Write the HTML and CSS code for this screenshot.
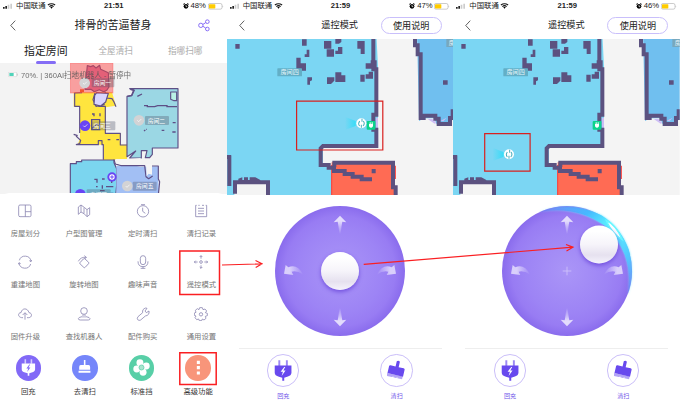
FILE: index.html
```html
<!DOCTYPE html>
<html lang="zh-CN">
<head>
<meta charset="utf-8">
<title>360AI扫地机器人</title>
<link rel="stylesheet" href="styles.css">
</head>
<body>
<svg class="defs" width="0" height="0">
  <defs>
    <symbol id="signal" viewBox="0 0 30 18"><path d="M0 12h5v5H0zM7 9h5v8H7z" fill="#222"/><path d="M14 5h5v12h-5zM22 2h5v15h-5z" fill="#ccc"/></symbol>
    <symbol id="wifi" viewBox="0 0 28 20"><g fill="none" stroke="#111" stroke-width="4"><path d="M2 7Q14-2 26 7M7 12Q14 6 21 12"/></g><path d="M10 14Q14 11 18 14L14 19z"/></symbol>
    <symbol id="alarm" viewBox="0 0 18 18"><circle cx="9" cy="10" r="7"/><path d="M1 4L5 1M17 4L13 1" stroke="#000" stroke-width="3"/><path d="M9 6v5h4" fill="none" stroke="#fff" stroke-width="2"/></symbol>
    <symbol id="battery" viewBox="0 0 48 20"><rect x="1" y="1" width="41" height="17" rx="5" fill="#fff" stroke="#999" stroke-width="1.5"/><rect x="3" y="3" width="19" height="13" rx="2" fill="#fc0"/><path d="M44 7q3 3 0 6z" fill="#999"/></symbol>
    <symbol id="chevron" viewBox="0 0 18 34"><path d="M16 2L2 17L16 32" fill="none" stroke="#333" stroke-width="2.4"/></symbol>

    <linearGradient id="fade" x1="0" y1="0" x2="0" y2="1"><stop offset=".3" stop-color="#e3dcfc"/><stop offset="1" stop-color="#e3dcfc" stop-opacity="0"/></linearGradient>
    <linearGradient id="fade-side" x1="0" y1="0" x2="1" y2="0"><stop offset=".3" stop-color="#e0d8fc" stop-opacity=".9"/><stop offset="1" stop-color="#e0d8fc" stop-opacity="0"/></linearGradient>
    <linearGradient id="beam" x1="0" y1="0" x2="1" y2="0"><stop offset="0" stop-color="#3cdcf8" stop-opacity=".05"/><stop offset=".7" stop-color="#35dcf8" stop-opacity=".9"/><stop offset="1" stop-color="#c8f6fc"/></linearGradient>
    <linearGradient id="rim" x1="0" y1="0" x2="1" y2="1"><stop offset="0" stop-color="#5b6cf5" stop-opacity=".3"/><stop offset=".3" stop-color="#45b9ff"/><stop offset=".5" stop-color="#5dfaff"/><stop offset=".75" stop-color="#52c9ff"/><stop offset="1" stop-color="#587df6" stop-opacity=".3"/></linearGradient>

    <symbol id="arrows" viewBox="0 0 390 390">
      <path id="up" d="M195 29L214 49L202 47Q199 60 197 84H193Q191 60 188 47L176 49z" fill="url(#fade)"/>
      <use href="#up" transform="matrix(1 0 0 -1 0 390)"/>
      <path id="left" d="M27 203L32 177L40 184Q66 172 85 206Q66 193 50 197L55 207z" fill="url(#fade-side)"/>
      <use href="#left" transform="matrix(-1 0 0 1 390 0)"/>
    </symbol>
    <symbol id="plug" viewBox="0 0 54 64">
      <path d="M12 1h6v17h-6zM35 1h6v17h-6z" opacity=".65"/><path d="M1 17h51v22q0 9-13 12l-9 3v9h-6v-9l-10-3Q1 48 1 39z"/><path d="M30 21L19 36h7l-4 13 12-17h-7l6-11z" class="bolt"/>
    </symbol>
    <symbol id="brush" viewBox="0 0 58 60">
      <g transform="rotate(13 29 30)"><path d="M24 1q5-5 10 0v17h16q4 0 4 4v22H4V22q0-4 4-4h16z"/><path d="M3 44h50v9H38v-3l-5 3h-8v-3l-5 3H3z" opacity=".5"/></g>
    </symbol>
    <symbol id="robot" viewBox="0 0 90 50">
      <path d="M5 6L30 16L47 22V28L30 35L5 44z" fill="url(#beam)"/><circle cx="53" cy="25" r="15" fill="#fff"/><path d="M55 11v9M48 18q-6 8 0 15M59 18q6 8-1 15M53 29v9" fill="none" stroke="#49aebc" stroke-width="3"/>
    </symbol>

    <symbol id="rooms" viewBox="2 116 680 468">
      <path fill="#f4f4f4" d="M0 100h700v500H0z"/>
      <path fill="#7bd6f3" d="M0 100h450l5 98v238H290v58l28 8v90H126v-48H24v48H0z"/>
      <path fill="#70bfef" d="M572 100h120v260l-14-2-5 14h-42l-8-18h-30l-15 8z"/>
      <path fill="#cdbdf5" d="M449 352h6v30h-6zM604 356h14l12 12-5 2zM643 361l18-9-10 11z"/>
      <path fill="#ff6b54" d="M316 486h190v110H316z"/><path d="M316 494v90M507 496v40" stroke="#ff3933" stroke-width="3"/>
      <g fill="none" stroke="#5c5280" stroke-width="12">
        <path d="M441 110v97h9v136h-9v45h9v49H290l-7 7v50h24v8h16v10h32v9h24v8h27v8h31"/>
        <path d="M324 500v-13h176v74h8v30"/>
        <path d="M566 110v25h8v27h9v191h9v-7h35v9h10v16h34v-18h8v-26"/>
        <path d="M9 465v92M26 580v-34h99v50M0 470h14"/>
      </g>
      <g fill="#5c5280">
        <path d="M27 131h13v14H27zM227 117h14v19h-14zM235 148h14v22h-14v-8h6v-14zM293 122h22v23h-22zM301 147h22v22h-22zM327 116h18v9l-7 5h-11zM327 151h8v-11h13v21h-21zM393 122h22v39h-12v-16h-10zM210 172h13v17h16v22h-29zM418 189h15v-9h18v25h-33zM243 231h14v9l-6 3v10h-8zM302 231h22v10l-10 10h-12zM327 216h18v9h12v20h-30zM402 223h13v21h-13zM418 222h9v-8h13v21h-22z"/>
        <path d="M650 240h14v13h-14zM436 506h12v13h-12zM36 543v-8l12-4v8h5v-8h12v8h5v-8h17l15 8v8z"/>
      </g>
      <g><rect x="153" y="204" width="74" height="24" rx="2" fill="#63afc6"/><text x="190" y="222" text-anchor="middle" class="map-label">房间四</text><rect x="660" y="116" width="34" height="24" fill="#78a8bd"/><text x="667" y="134" class="map-label">房</text></g>
      <rect x="421" y="362" width="26" height="26" rx="3" fill="#0bd38b"/><path d="M428 371h12v7q-6 9-12 0zM430 366h3v6h-3zM436 366h3v6h-3z" fill="#fff"/>
    </symbol>
  </defs>
</svg>

<main class="screens">
  <section class="phone">
    <header class="status"><svg class="signal"><use href="#signal"/></svg><span class="carrier">中国联通</span><svg class="wifi"><use href="#wifi"/></svg><time>21:51</time><svg class="alarm"><use href="#alarm"/></svg><span class="percent">48%</span><svg class="battery"><use href="#battery"/></svg></header>
    <nav class="nav nav-home">
      <svg class="chevron"><use href="#chevron"/></svg><h1>排骨的苦逼替身</h1>
      <svg class="share" viewBox="0 0 36 38"><g fill="none" stroke="#8065f5" stroke-width="2.8"><circle cx="8.500" cy="19" r="6.5"/><circle cx="28" cy="8" r="5.5"/><circle cx="28" cy="30" r="5.5"/><path d="M15 16l8-5M15 22l8 5"/></g></svg>
    </nav>
    <div class="tabs"><span class="tab active">指定房间</span><span class="tab">全屋清扫</span><span class="tab">指哪扫哪</span></div>
    <div class="home-map">
      <svg class="plan" viewBox="0 189 680 420" preserveAspectRatio="none">
        <g stroke="#5e4f86" stroke-width="3.5" stroke-linejoin="round">
          <path fill="#ce7fab" d="M262 197l10 3 8-3 8 7 11-8 3 12 23 10 2 43-7 10-9 4-13-6-15 6-10-7h-18z"/>
          <path stroke="none" fill="#ffe53e" d="M221 277h115l12 40-31 5v78h45v34h19v46h-71v-46h-77l7-19V320h-19z"/>
          <path fill="none" d="M246 278l-22 1v40h15v80M228 408l14 13-3 10-10 3h66v-12h11v12h4v45M285 279l-6 20 9 20 26-6M314 275l8 12-4 7 18 2 6 10 6 14M295 319h21v81h45v35h20"/>
          <path fill="#9bd7e4" d="M381 289l14-2 8-16-14-5h145v178h-77v19l-8 10h-13l5-21h-17v22h-35l18-21-26 17z"/>
          <path fill="#7bd5ef" d="M211 610V491h18v-6h16v-5h97v8l8 18v50l-5 54z"/>
          <path fill="#a2bff4" stroke="none" d="M349 498l30-2 18-1 24 5 54-1v50l5 61H349z"/>
          <path fill="none" d="M342 478l4 14 18 5h70l4 33 8 6 12-8M450 498h25v39l4 8-4 40"/>
          <path fill="#d9d5ff" d="M284 286l6-8 35 2-8 26-15 12-20-5z"/>
          <path fill="#baf0e5" d="M512 276h18v26h-8l-10-4z"/>
        </g>
        <path fill="#f5f5f5" d="M346 477h40l36-3v21h-56l-18-5zM438 492h18v32l-10-3-6 8z"/>
        <path fill="none" stroke="#5e4f86" stroke-width="4" d="M391 268l10 3-6 15-13 3M412 289l14-7M432 317h10v3h22l9-3h28v3h30M432 393l4-3M438 388h2M485 391h8M517 396h10M518 368h9M276 342h6v7M300 340v9M275 359h24v30h-24zM277 385l14-12 10 4M221 403l12 4M323 419h8M349 419h8M283 538h8v10M288 560h5M306 537h8M325 533h10v16M307 556v10M318 560h22M300 572h14M332 580h8"/>
        <rect x="211" y="189" width="128" height="90" fill="#ff3c3c" fill-opacity=".46" stroke="#ff4a4a" stroke-opacity=".5" stroke-width="2"/>
        <path d="M240 278v-10h12v8z" fill="#f25432"/>
        <g fill="#555b70" fill-opacity=".36"><rect x="275" y="235" width="68" height="27" rx="3"/><rect x="435" y="348" width="72" height="27" rx="3"/><rect x="275" y="364" width="71" height="27" rx="3"/><rect x="398" y="545" width="72" height="27" rx="3"/><rect x="260" y="568" width="72" height="27" rx="3"/></g>
        <g class="map-label room"><text x="281" y="255">房间一</text><text x="443" y="368">房间二</text><text x="280" y="384">房间三</text><text x="408" y="565">房间五</text><text x="269" y="590">房间四</text></g>
        <g fill="#d3d3d5"><circle cx="254" cy="249" r="16"/><circle cx="417" cy="361" r="16"/><circle cx="382" cy="558" r="16"/></g>
        <g fill="#6945f4"><circle cx="255" cy="377" r="16"/><circle cx="241" cy="583" r="16"/><circle cx="336" cy="531" r="14"/></g>
        <circle cx="336" cy="531" r="8" fill="#fff"/><path d="M331 531h10M336 526v10" stroke="#8468f6" stroke-width="4"/>
        <path d="M249 249l4 4 8-8M412 361l4 4 8-8M377 558l4 4 8-8M250 377l4 4 8-8" fill="none" stroke="#fff" stroke-width="2"/>
      </svg>
      <div class="robot-state"><svg viewBox="0 0 30 16"><rect x="1" y="1" width="25" height="13" rx="2" fill="#fff" stroke="#aaa"/><path d="M4 3h13v9H4z" fill="#34ceb0"/><path d="M28 5v6" stroke="#aaa" stroke-width="2"/></svg><span>70%. | 360AI扫地机器人 - 暂停中</span></div>
    </div>
    <div class="sheet">
      <div class="tools">
        <div class="tool"><svg viewBox="0 0 42 42"><rect x="2" y="3" width="37" height="35" rx="4"/><path d="M22 3v35M22 23h17"/></svg><span>房屋划分</span></div>
        <div class="tool"><svg viewBox="0 0 42 42"><path d="M4 9l8-6 11 8 7 6 8-6v21l-8 6-9-9V11M4 9v22l8-7 9 5M12 3v21M30 17v21"/></svg><span>户型图管理</span></div>
        <div class="tool"><svg viewBox="0 0 42 42"><circle cx="21" cy="22" r="17"/><path d="M15 2h12M20 11v11l8 6"/></svg><span>定时清扫</span></div>
        <div class="tool"><svg viewBox="0 0 42 42"><path d="M8 4H5v34h33V4h-3M13 4h4M24 4h6M12 13h18M12 21h18M12 29h18"/></svg><span>清扫记录</span></div>
        <div class="tool"><svg viewBox="0 0 42 42"><path d="M4 16a18 18 0 0 1 35 3M38 27a18 18 0 0 1-35-3M1 28l2-5 5 3M41 15l-2 5-5-3"/></svg><span>重建地图</span></div>
        <div class="tool"><svg viewBox="0 0 42 42"><rect x="11" y="14" width="21" height="21" rx="3" transform="rotate(43 22 25)"/><path d="M4 19Q11 5 28 7M22 2l6 5-5 5"/></svg><span>旋转地图</span></div>
        <div class="tool"><svg viewBox="0 0 42 42"><rect x="13" y="2" width="16" height="27" rx="8"/><path d="M6 19q0 16 15 16t15-16M21 35v5M14 40h14"/></svg><span>趣味声音</span></div>
        <div class="tool"><svg viewBox="0 0 42 42"><circle cx="21" cy="21" r="4"/><path d="M21 11V2M17 6l4-4 4 4M21 31v9M17 36l4 4 4-4M11 21H1M5 17l-4 4 4 4M31 21h10M37 17l4 4-4 4"/></svg><span>遥控模式</span></div>
        <div class="tool"><svg viewBox="0 0 42 42"><path d="M15 32h-4C-3 29 1 16 9 17 12 2 29 2 33 17c11 1 9 15-1 15h-5M21 38V18M14 24l7-7 7 7"/></svg><span>固件升级</span></div>
        <div class="tool"><svg viewBox="0 0 42 42"><circle cx="21" cy="12" r="10"/><path d="M18 22v10M24 22v10M15 29q-11 2-11 6 0 4 6 4h24q5 0 5-4 0-4-12-6"/></svg><span>查找机器人</span></div>
        <div class="tool"><svg viewBox="0 0 42 42"><path d="M20 17Q18 6 29 3l4 1-6 8 4 5 8-5q2 13-11 15L14 39q-5 3-9-1-3-4 1-9z"/></svg><span>配件购买</span></div>
        <div class="tool"><svg viewBox="0 0 42 42"><path d="M17 2h8l2 6 6-2 5 6-4 5 6 2v7l-6 2 2 6-6 5-5-3-2 5h-7l-2-5-6 2-5-6 3-5-5-2v-7l5-2-2-6 6-5 5 3z"/><circle cx="21" cy="22" r="5"/></svg><span>通用设置</span></div>
      </div>
      <div class="actions">
        <div class="action"><i class="disc violet"><svg viewBox="0 0 54 64"><use href="#plug"/></svg></i><span>回充</span></div>
        <div class="action"><i class="disc blue"><svg viewBox="0 0 42 48"><path d="M19 0h5v16h10q5 0 5 6v9H4v-9q0-6 5-6h10zM2 34h38v7H2z"/></svg></i><span>去清扫</span></div>
        <div class="action"><i class="disc green"><svg viewBox="0 0 54 54"><circle cx="22" cy="12" r="11"/><circle cx="42" cy="22" r="11"/><circle cx="32" cy="42" r="11"/><circle cx="12" cy="32" r="11"/><circle cx="27" cy="27" r="8" fill="#a8e5cf" stroke="#50cba1" stroke-width="2"/></svg></i><span>标准挡</span></div>
        <div class="action"><i class="disc coral"><svg viewBox="0 0 54 54"><path d="M21 3h11v11H21zM21 22h11v11H21zM21 41h11v11H21z"/></svg></i><span>高级功能</span></div>
      </div>
    </div>
  </section>

  <section class="phone">
    <header class="status"><svg class="signal"><use href="#signal"/></svg><span class="carrier">中国联通</span><svg class="wifi"><use href="#wifi"/></svg><time>21:59</time><svg class="alarm"><use href="#alarm"/></svg><span class="percent">47%</span><svg class="battery"><use href="#battery"/></svg></header>
    <nav class="nav"><svg class="chevron"><use href="#chevron"/></svg><h2>遥控模式</h2><button>使用说明</button></nav>
    <svg class="remote-map" viewBox="2 116 680 468" preserveAspectRatio="none"><use href="#rooms" x="2" y="116" width="680" height="468"/><use href="#robot" x="352" y="344" width="90" height="50"/></svg>
    <div class="pad-area"><div class="pad"><svg class="arrows"><use href="#arrows"/></svg><i class="knob"></i></div></div>
    <div class="modes">
      <div class="mode"><i><svg><use href="#plug"/></svg></i><span>回充</span></div>
      <div class="mode"><i><svg><use href="#brush"/></svg></i><span>清扫</span></div>
    </div>
  </section>

  <section class="phone">
    <header class="status"><svg class="signal"><use href="#signal"/></svg><span class="carrier">中国联通</span><svg class="wifi"><use href="#wifi"/></svg><time>21:59</time><svg class="alarm"><use href="#alarm"/></svg><span class="percent">46%</span><svg class="battery"><use href="#battery"/></svg></header>
    <nav class="nav"><svg class="chevron"><use href="#chevron"/></svg><h2>遥控模式</h2><button>使用说明</button></nav>
    <svg class="remote-map" viewBox="2 116 680 468" preserveAspectRatio="none"><use href="#rooms" x="2" y="116" width="680" height="468"/><use href="#robot" x="117" y="437" width="90" height="50"/></svg>
    <div class="pad-area"><div class="pad moved"><svg class="arrows" viewBox="0 0 390 390"><use href="#arrows" width="390" height="390"/><path d="M182 195h26M195 182v26" stroke="#cfc3fb" stroke-width="2.500"/></svg>
      <svg class="glow" viewBox="0 0 390 390"><path d="M110 18Q200-20 298 28Q354 62 380 130Q402 205 377 268Q388 200 368 145Q348 98 307 58Q220-3 110 18z" fill="url(#rim)"/><path d="M313 44q28 12 48 57-29-17-48-57z" fill="#fff" stroke="#69f7ff" stroke-width="4"/></svg>
      <i class="knob"></i></div></div>
    <div class="modes">
      <div class="mode"><i><svg><use href="#plug"/></svg></i><span>回充</span></div>
      <div class="mode"><i><svg><use href="#brush"/></svg></i><span>清扫</span></div>
    </div>
  </section>
</main>

<svg class="annotations" viewBox="0 0 680 403">
  <g stroke-width="1.5"><path d="M179.8 251h39.7v43.6h-39.7zM179.8 352.7h36.4v31.7h-36.4z"/></g>
  <path d="M296.6 101.2h86.2v48.8h-86.2zM484.7 133.6h45.4v37.6h-45.4z" class="dark"/>
  <path d="M222 265L262 263.8M255.500 260.500L262 263.800L255.700 267.500M363.700 264.300L573 247.200M566 244.500L573 247.200L566.500 251"/>
</svg>
</body>
</html>
```
FILE: styles.css
```css
* { box-sizing: border-box; }
body { margin: 0; width: 680px; height: 403px; overflow: hidden; position: relative; background: #fff; color: #222; font-family: "Liberation Sans", "Noto Sans CJK SC", sans-serif; }
svg { display: block; flex: none; }
i { font-style: normal; }
.defs { position: absolute; }
.screens { display: grid; grid-template-columns: repeat(3, 1fr); height: 403px; }
.phone { display: flex; flex-direction: column; min-width: 0; background: #fff; }

.status { display: grid; grid-template-columns: 12px 32px 10px 1fr 6px 19px 16px; align-items: center; height: 12px; padding: 0 3px 0 3px; font-size: 7.4px; line-height: 12px; white-space: nowrap; }
.status .signal { width: 10px; height: 6px; }
.status .wifi { width: 9px; height: 6px; }
.status time { font-size: 7.6px; font-weight: 700; text-align: center; padding-right: 12px; }
.status .alarm { width: 6px; height: 6px; }
.status .percent { font-size: 7.7px; text-align: center; }
.status .battery { width: 16px; height: 7px; }
.carrier { padding-left: 1px; }

.nav { display: grid; grid-template-columns: 66px 94px 1fr; align-items: center; height: 26.67px; }
.nav .chevron { width: 6px; height: 11px; margin-left: 12px; }
.nav h1, .nav h2 { margin: 0; text-align: center; font-weight: 400; white-space: nowrap; line-height: 16px; }
.nav h1 { font-size: 11px; }
.nav h2 { font-size: 9.2px; }
.nav button { width: 61px; height: 16.5px; margin: 0 0 0 -6px; padding: 0; border: 1px solid #c9bffb; border-radius: 9px; background: #fff; color: #222; font: 9.1px/14px "Noto Sans CJK SC", sans-serif; }
.nav-home .chevron { margin-left: 10px; }
.share { width: 12px; height: 12.7px; margin-left: 37.500px; }

.tabs { display: grid; grid-template-columns: 43.500px 34.500px 34.500px; column-gap: 31px; align-items: center; height: 24.33px; padding-left: 24px; font-size: 8.6px; color: #aaa; line-height: 14px; white-space: nowrap; }
.tab:last-child { margin-left: 4px; }
.tab.active { position: relative; font-size: 10.9px; color: #222; }
.tab.active::after { content: ""; position: absolute; z-index: 2; left: 12px; top: 17.500px; width: 20px; height: 2.5px; border-radius: 2px; background: #846df5; }
.home-map { display: grid; height: 131px; overflow: hidden; background: #f3f3f3; }
.home-map > * { grid-area: 1 / 1; }
.plan { width: 226.67px; height: 140px; }
.robot-state { display: flex; align-items: center; gap: 3px; height: 11px; margin: 6.500px 0 0 8px; font-size: 7.55px; color: #555; white-space: nowrap; opacity: .85; }
.robot-state svg { width: 10px; height: 5.3px; }
.map-label { fill: #e6f5fa; font: 18.500px "Noto Sans CJK SC", sans-serif; }
.room { font-size: 17.5px; }
.room text { fill: #fff; }

.sheet { flex: 1; background: #fff; border-radius: 9px 9px 0 0; padding: 10.500px 0 0; position: relative; margin-top: -.5px; }
.tools { display: grid; grid-template-columns: repeat(4, 58.7px); grid-auto-rows: 51.3px; margin-left: -4px; }
.tool { display: flex; flex-direction: column; align-items: center; font-size: 7.35px; line-height: 12px; color: #777; white-space: nowrap; }
.tool svg { width: 14px; height: 14px; margin-bottom: 10px; fill: none; stroke: #8580ae; stroke-width: 2.3; stroke-linejoin: round; }
.actions { display: grid; grid-template-columns: repeat(4, 56.6px); margin-top: -2.600px; }
.action { display: flex; flex-direction: column; align-items: center; gap: 5.5px; font-size: 7.35px; line-height: 12px; color: #333; white-space: nowrap; }
.disc { display: grid; place-items: center; width: 25.4px; height: 25.4px; border-radius: 50%; }
.disc svg { width: 15px; height: 15px; fill: #fff; }
.violet { background: #8269f7; }
.violet svg { height: 17px; --bolt: #8269f7; }
.blue { background: #7586fa; }
.green { background: #58cfa7; }
.green svg { width: 17px; height: 17px; }
.coral { background: #f8957a; }
.bolt { fill: var(--bolt, #fff); }

.remote-map { width: 100%; height: 156px; }
.pad-area { display: grid; place-items: center; height: 154px; margin: 0 11.700px 0 12px; border-bottom: 1px solid #eee; }
.pad { position: relative; display: grid; place-items: center; width: 130px; height: 130px; border-radius: 50%; background: radial-gradient(circle closest-side, #aa95f7 0, #9d84f5 65%, #987cf3 85%, #8a6ced 100%); }
.pad > * { grid-area: 1 / 1; }
.arrows, .glow { width: 130px; height: 130px; }
.glow { overflow: visible; filter: drop-shadow(0 0 1px #72e6ff); }
.knob { width: 38.500px; height: 38.500px; border-radius: 50%; background: linear-gradient(#fff 15%, #f6f4fa 50%, #e6e1ef 78%, #f5f3fc); box-shadow: 0 2px 4px #7250de; z-index: 1; }
.moved .knob { transform: translate(32px, -26.500px); }
.modes { display: flex; justify-content: space-around; padding: 5.700px 0 0; }
.mode { display: flex; flex-direction: column; align-items: center; gap: 3.500px; width: 50px; color: #7054e9; font-size: 6.1px; line-height: 12px; }
.mode i { display: grid; place-items: center; width: 32.3px; height: 32.3px; border: 1px solid #cbbff9; border-radius: 50%; }
.mode svg { width: 18.500px; height: 21px; fill: #6849ee; }

.annotations { position: absolute; inset: 0; width: 680px; height: 403px; fill: none; stroke: #fa1f22; stroke-width: 1.2; pointer-events: none; z-index: 5; }
.dark { stroke: #d9201f; }
```
